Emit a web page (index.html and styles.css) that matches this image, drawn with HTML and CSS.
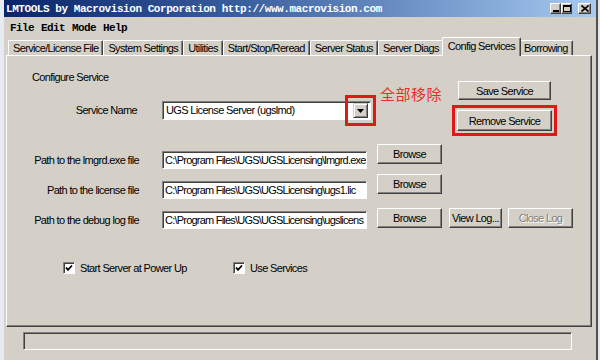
FILE: index.html
```html
<!DOCTYPE html>
<html>
<head>
<meta charset="utf-8">
<link rel="stylesheet" href="styles.css">
</head>
<body>
<div class="screen">
  <div class="strip"></div>
  <div class="window">
    <div class="titlebar">
      <span class="title">LMTOOLS by Macrovision Corporation http://www.macrovision.com</span>
      <div class="wbtns">
        <span class="wbtn"><svg width="8" height="7" viewBox="0 0 8 7"><rect x="1" y="5" width="6" height="2" fill="#000"/></svg></span>
        <span class="wbtn"><svg width="8" height="7" viewBox="0 0 8 7"><rect x="0.5" y="0.5" width="7" height="6" fill="none" stroke="#000"/><rect x="0" y="0" width="8" height="2" fill="#000"/></svg></span>
        <span class="wbtn close"><svg width="8" height="7" viewBox="0 0 8 7"><path d="M0.5 0.5 L7.5 6.5 M7.5 0.5 L0.5 6.5" stroke="#000" stroke-width="1.6"/></svg></span>
      </div>
    </div>
    <div class="menubar"><span>File</span><span>Edit</span><span>Mode</span><span>Help</span></div>
    <div class="tabs">
      <div class="tab">Service/License File</div>
      <div class="tab">System Settings</div>
      <div class="tab">Utilities</div>
      <div class="tab">Start/Stop/Reread</div>
      <div class="tab">Server Status</div>
      <div class="tab">Server Diags</div>
      <div class="tab active">Config Services</div>
      <div class="tab">Borrowing</div>
    </div>
    <div class="panel">
      <div class="top">
        <div class="left">
          <div class="heading">Configure Service</div>
          <div class="srow">
            <div class="label svc">Service Name</div>
            <div class="combo">
              <div class="ctext">UGS License Server (ugslmd)</div>
              <div class="drop"><svg width="7" height="4" viewBox="0 0 7 4"><polygon points="0,0 7,0 3.5,4" fill="#000"/></svg></div>
              <span class="note">全部移除</span>
            </div>
          </div>
        </div>
        <div class="actions">
          <div class="btn save">Save Service</div>
          <div class="btn remove">Remove Service</div>
        </div>
      </div>
      <div class="prow r1">
        <div class="label">Path to the lmgrd.exe file</div>
        <div class="field">C:\Program Files\UGS\UGSLicensing\lmgrd.exe</div>
        <div class="btn browse">Browse</div>
      </div>
      <div class="prow r2">
        <div class="label">Path to the license file</div>
        <div class="field">C:\Program Files\UGS\UGSLicensing\ugs1.lic</div>
        <div class="btn browse">Browse</div>
      </div>
      <div class="prow r3">
        <div class="label">Path to the debug log file</div>
        <div class="field">C:\Program Files\UGS\UGSLicensing\ugslicens</div>
        <div class="btn browse">Browse</div>
        <div class="btn viewlog">View Log...</div>
        <div class="btn closelog disabled">Close Log</div>
      </div>
      <div class="checks">
        <div class="chk first"><span class="box"><svg width="8" height="8" viewBox="0 0 8 8"><polyline points="1,3.5 3,5.8 7,1.5" fill="none" stroke="#000" stroke-width="1.8"/></svg></span><span>Start Server at Power Up</span></div>
        <div class="chk"><span class="box"><svg width="8" height="8" viewBox="0 0 8 8"><polyline points="1,3.5 3,5.8 7,1.5" fill="none" stroke="#000" stroke-width="1.8"/></svg></span><span>Use Services</span></div>
      </div>
    </div>
    <div class="status"></div>
  </div>
</div>
</body>
</html>
```
FILE: styles.css
```css
html, body {
  margin: 0;
  padding: 0;
}
body {
  width: 600px;
  height: 360px;
  overflow: hidden;
  background: #e4e6e8;
  font-family: "Liberation Sans", Arial, sans-serif;
  font-size: 11px;
  letter-spacing: -0.65px;
  color: #000;
}
.screen {
  display: flex;
  height: 360px;
}
.strip {
  width: 4px;
  flex: none;
  background: #e6ebf2;
}
.window {
  width: 594px;
  flex: none;
  box-sizing: border-box;
  background: #d4d0c8;
  border-right: 2px solid #505050;
  display: flex;
  flex-direction: column;
}
.titlebar {
  height: 17px;
  flex: none;
  display: flex;
  align-items: center;
  padding: 0 5px 0 2px;
  background: linear-gradient(90deg, #0a246a 0%, #3a5f9e 40%, #a6caf0 100%);
  color: #fff;
}
.title {
  font-family: "Liberation Mono", monospace;
  font-weight: bold;
  font-size: 11px;
  letter-spacing: -0.44px;
  white-space: nowrap;
}
.wbtns {
  margin-left: auto;
  display: flex;
}
.wbtn {
  width: 11px;
  height: 11px;
  box-sizing: border-box;
  background: #d4d0c8;
  border: 1px solid;
  border-color: #fff #404040 #404040 #fff;
  box-shadow: inset -1px -1px #808080;
  display: flex;
  align-items: center;
  justify-content: center;
}
.wbtn.close {
  margin-left: 6px;
  width: 13px;
}
.menubar {
  height: 20px;
  flex: none;
  display: flex;
  align-items: center;
  padding: 1px 0 0 6px;
  box-sizing: border-box;
  font-family: "Liberation Mono", monospace;
  font-weight: bold;
  font-size: 11px;
  letter-spacing: -0.6px;
}
.menubar span {
  margin-right: 7px;
}
.tabs {
  height: 18px;
  flex: none;
  display: flex;
  align-items: flex-end;
  padding-left: 4px;
}
.tab {
  height: 15px;
  box-sizing: border-box;
  padding: 0 4px 1px;
  border: 1px solid;
  border-bottom: none;
  border-color: #fff #404040 transparent #fff;
  border-radius: 2px 2px 0 0;
  box-shadow: inset -1px 0 #808080;
  display: flex;
  align-items: center;
  justify-content: center;
  white-space: nowrap;
}
.tab.active {
  height: 19px;
  margin: 0 -2px -1px;
  padding: 0 5px 3px;
  position: relative;
  z-index: 1;
  background: #d4d0c8;
}
.panel {
  margin-left: 2px;
  width: 586px;
  height: 272px;
  flex: none;
  box-sizing: border-box;
  border: 1px solid;
  border-color: #fff #404040 #404040 #fff;
  box-shadow: inset -1px -1px #808080;
}
.top {
  display: flex;
}
.left {
  padding-top: 15px;
}
.heading {
  padding-left: 25px;
  line-height: 12px;
  height: 12px;
}
.srow {
  margin-top: 18px;
  display: flex;
  align-items: center;
}
.label {
  width: 132px;
  flex: none;
  box-sizing: border-box;
  text-align: right;
  line-height: 18px;
  white-space: nowrap;
}
.label.svc {
  padding-right: 2px;
  line-height: 19px;
}
.combo {
  position: relative;
  margin-left: 23px;
  width: 209px;
  height: 19px;
  box-sizing: border-box;
  border: 1px solid;
  border-color: #808080 #fff #fff #808080;
  box-shadow: inset 1px 1px #404040;
  padding: 1px 2px 1px 1px;
  background: #fff;
  display: flex;
}
.ctext {
  flex: 1;
  padding-left: 2px;
  line-height: 15px;
  white-space: nowrap;
}
.drop {
  width: 15px;
  box-sizing: border-box;
  background: #d4d0c8;
  border: 1px solid;
  border-color: #d4d0c8 #404040 #404040 #d4d0c8;
  box-shadow: inset 1px 1px #fff, inset -1px -1px #808080;
  display: flex;
  align-items: center;
  justify-content: center;
  outline: 3px solid #e01818;
  outline-offset: 5px;
}
.note {
  position: absolute;
  left: 217px;
  top: -16px;
  color: #e3302a;
  font-family: "Noto Sans CJK SC", sans-serif;
  font-size: 15px;
  line-height: 16px;
  letter-spacing: 0.5px;
  white-space: nowrap;
}
.actions {
  margin-left: auto;
  margin-right: 39px;
  padding-top: 25px;
  display: flex;
  flex-direction: column;
  align-items: center;
}
.btn {
  box-sizing: border-box;
  background: #d4d0c8;
  border: 1px solid;
  border-color: #fff #404040 #404040 #fff;
  box-shadow: inset -1px -1px #808080;
  display: flex;
  align-items: center;
  justify-content: center;
  white-space: nowrap;
  flex: none;
}
.save {
  width: 93px;
  height: 19px;
}
.remove {
  width: 95px;
  height: 21px;
  margin-top: 10px;
  outline: 3px solid #e01818;
  outline-offset: 2px;
}
.prow {
  display: flex;
  align-items: flex-start;
}
.r1 {
  margin-top: 13px;
}
.r2 {
  margin-top: 5px;
}
.r3 {
  margin-top: 9px;
}
.prow .label,
.prow .field {
  margin-top: 7px;
}
.r3 .label,
.r3 .field {
  margin-top: 3px;
}
.field {
  margin-left: 23px;
  width: 205px;
  height: 18px;
  box-sizing: border-box;
  border: 1px solid;
  border-color: #808080 #fff #fff #808080;
  box-shadow: inset 1px 1px #404040;
  background: #fff;
  padding-left: 2px;
  line-height: 16px;
  letter-spacing: -0.78px;
  white-space: nowrap;
  overflow: hidden;
  flex: none;
}
.browse {
  margin-left: 10px;
  width: 65px;
  height: 20px;
}
.viewlog {
  margin-left: 7px;
  width: 53px;
  height: 20px;
}
.closelog {
  margin-left: 6px;
  width: 65px;
  height: 20px;
}
.disabled {
  color: #808080;
  text-shadow: 1px 1px #fff;
}
.checks {
  margin-top: 33px;
  padding-left: 56px;
  display: flex;
  align-items: center;
}
.chk {
  display: flex;
  align-items: center;
  line-height: 12px;
  white-space: nowrap;
}
.chk.first {
  width: 170px;
}
.box {
  width: 12px;
  height: 12px;
  box-sizing: border-box;
  border: 1px solid;
  border-color: #808080 #fff #fff #808080;
  box-shadow: inset 1px 1px #404040;
  background: #fff;
  display: flex;
  align-items: center;
  justify-content: center;
  margin-right: 5px;
  flex: none;
}
.status {
  margin: 5px 0 0 19px;
  width: 549px;
  height: 18px;
  box-sizing: border-box;
  border: 1px solid;
  border-color: #808080 #fff #fff #808080;
  box-shadow: inset 1px 1px #404040;
  flex: none;
}
```
